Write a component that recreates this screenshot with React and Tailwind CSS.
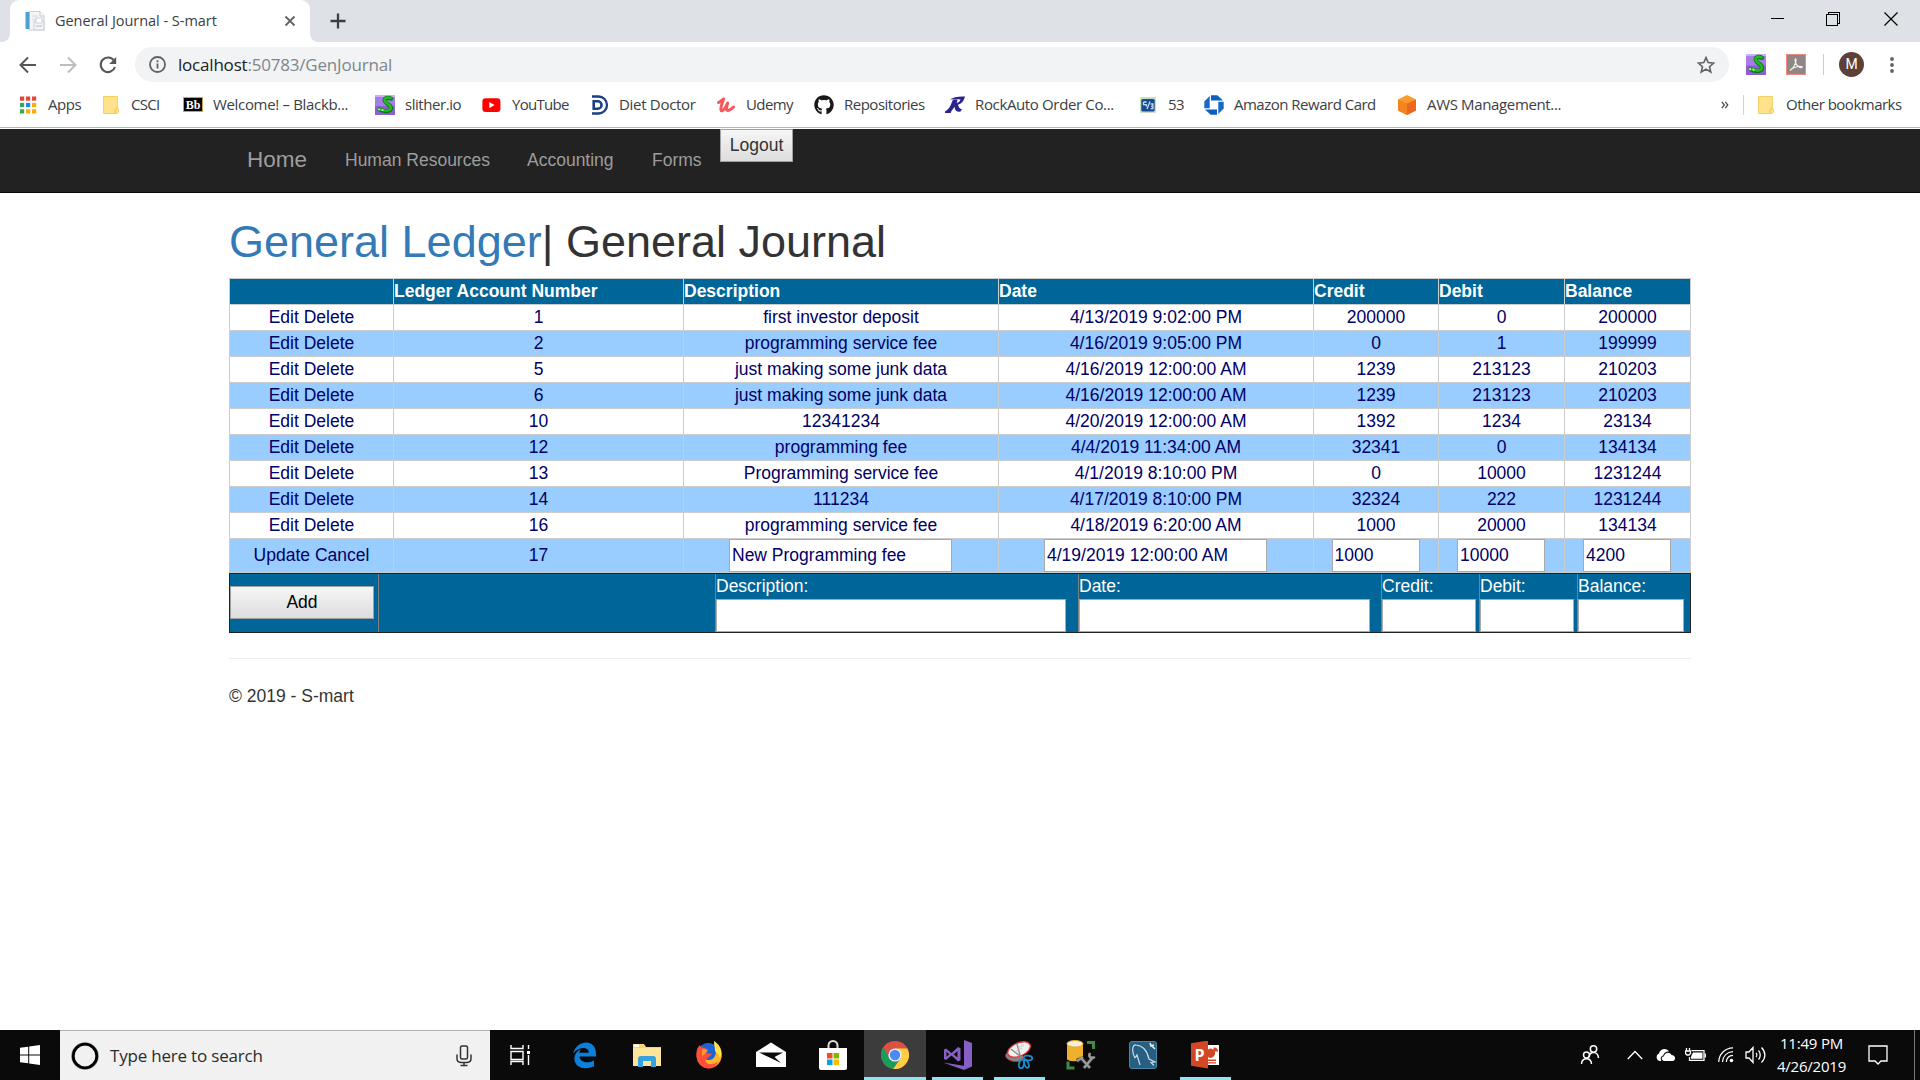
import React from "react";
import { FaGithub } from "react-icons/fa";

const UI = "font-['Open_Sans','Noto_Sans',sans-serif]";

/* ---------- browser icons ---------- */
const PageIcon = () => (
  <svg viewBox="0 0 20 20" className="size-5">
    <path d="M4 .5h11l4 4V19H4z" fill="#f3f5f8" stroke="#ccd1da" />
    <path d="M15 .5V5h4" fill="#fff" stroke="#c3c8d2" />
    <path d="M7 5h6M7 8h8" stroke="#d6dae0" />
    <rect x=".5" y="1" width="4" height="17" fill="#4e9fd4" />
    <rect x="9" y="10" width="10" height="9" fill="#f2f4f6" stroke="#c9ced6" />
    <rect x="11" y="7" width="6" height="5" fill="#fff" stroke="#cdd2da" />
    <path d="M11 15h6" stroke="#b5bbc6" />
  </svg>
);
const AppsIcon = () => (
  <svg viewBox="0 0 20 20" className="size-5">
    {["#ea4335", "#ea4335", "#ea4335", "#34a853", "#1e88f0", "#fbac05", "#34a853", "#fbac05", "#fbac05"].map((c, i) => (
      <rect key={i} x={2 + (i % 3) * 6} y={1.5 + Math.floor(i / 3) * 6.4} width="4.2" height="4.2" fill={c} />
    ))}
  </svg>
);
const FolderIcon = () => (
  <svg viewBox="0 0 20 20" className="size-5">
    <path d="M2.6 1.5h13.8V13c1.8.6 1.8 5.5-.8 5.5h-13z" fill="#ffe28a" stroke="#f3cf62" />
    <path d="M14.6 18.3c-1-1-.7-3 .2-4.5l1.600-1" fill="none" stroke="#eebf45" />
  </svg>
);
const BbIcon = () => (
  <span className="flex h-[15px] w-5 items-center justify-center border border-[#c9a24a] bg-black font-['Liberation_Serif',serif] text-[12px] leading-none font-bold text-white">
    Bb
  </span>
);
const SlitherIcon = () => (
  <svg viewBox="0 0 20 20" preserveAspectRatio="none" className="size-full">
    <rect width="20" height="20" fill="#8f5fd2" />
    <rect width="20" height="11" fill="#a67ce6" />
    <rect width="20" height="2" fill="#c9b0f5" />
    <path d="M16 3.600c-3.500-1.600-6.500-.6-6.300 2 .3 3 6.300 3.900 6.300 7.400 0 3.600-6 4-11.500 1.500" fill="none" stroke="#0c7a12" strokeWidth="4.200" strokeLinecap="round" />
    <path d="M15.600 3.200c-3.200-1.400-6.200-.4-6 2.200.3 3 6.300 3.900 6.300 7.400 0 3.400-6 3.600-11.200 1.400" fill="none" stroke="#20bd25" strokeWidth="2.400" strokeLinecap="round" />
    <circle cx="4" cy="14.500" r="1.100" fill="#b6e8b6" />
    <circle cx="7.500" cy="15" r="1.100" fill="#b6e8b6" />
  </svg>
);
const YouTubeIcon = () => (
  <svg viewBox="0 0 20 20" className="size-5">
    <rect x=".4" y="3.300" width="18" height="13.600" rx="3.200" fill="#f00" />
    <path d="M7.300 7v6.200l5.200-3.100z" fill="#fff" />
  </svg>
);
const DietIcon = () => (
  <svg viewBox="0 0 20 20" className="size-5">
    <path d="M3 1.500h6.500a8.400 8.400 0 0 1 0 17H3" fill="none" stroke="#1c3f86" strokeWidth="2.300" />
    <path d="M4.700 6.200h4a3.800 3.800 0 0 1 0 7.600h-4z" fill="none" stroke="#1c3f86" strokeWidth="2.600" />
  </svg>
);
const UdemyIcon = () => (
  <svg viewBox="0 0 20 20" className="size-5">
    <path d="M2.500 7.500C5 7 6.500 4.500 7.700 4 6.500 7 4.300 12.500 5 15c.9 2.800 5.200-2.200 6.600-7-1.200 4-1.600 7.500.4 7.500 2 0 4-2 5.700-3.500" fill="none" stroke="#f4595e" strokeWidth="3" strokeLinecap="round" strokeLinejoin="round" />
  </svg>
);
const RockIcon = () => (
  <svg viewBox="0 0 20 20" className="size-5">
    <path d="M5 4.500C8 2.300 14 1 20 1.500c-1 4-3 7-7 8.300.5 2.200 1.500 4 4 4.500l-1.500 2.200c-4.500 1-6-2-6-6L11 8c2 0 4-1.500 4.500-3.500C12 4 8 4 5 4.500z" fill="#29248f" />
    <path d="M8 4.500h4.500c-.5 5-4 9-6 11.500L5.500 18H0v-1.500c2-1 4-3 5.500-6z" fill="#29248f" />
  </svg>
);
const FiveThreeIcon = () => (
  <svg viewBox="0 0 20 20" className="size-5">
    <rect x="2" y="2" width="16" height="16" rx="1" fill="#c8dfc0" />
    <rect x="3.300" y="4" width="13.400" height="12.500" rx="1.500" fill="#174a93" />
    <path d="M5.500 7h3M5.500 7v2.600h2.800v2M12 6.500l-3 7.500M12.600 9h2.300v4.600h-2.300M15 11.300h-2" fill="none" stroke="#c9dcf0" strokeWidth="1.300" />
  </svg>
);
const ChaseIcon = () => (
  <svg viewBox="0 0 20 20" className="size-5">
    <path d="M7 .3h6.300L19 5.600H7z" fill="#0b5fc0" />
    <path d="M19.700 6.700v6.700L14.300 19V6.700z" fill="#1569c8" />
    <path d="M13 19.700H6.700L1 14.400h12z" fill="#0b5fc0" />
    <path d="M.3 13.300V6.600L5.700 1v12.300z" fill="#1569c8" />
  </svg>
);
const AwsIcon = () => (
  <svg viewBox="0 0 20 20" className="size-5">
    <path d="M10 0 19 4.500V15.500L10 20 1 15.500V4.500z" fill="#fb9b2b" />
    <path d="M1 4.500 10 8.500V20L1 15.500z" fill="#f58320" />
    <path d="M19 4.500 10 8.500V20L19 15.500z" fill="#ec671f" />
  </svg>
);

const bookmarks = [
  { t: "Apps", w: "w-[83px]", k: "tracking-[-0.45px]", I: AppsIcon },
  { t: "CSCI", w: "w-[82px]", k: "tracking-[-0.7px]", I: FolderIcon },
  { t: "Welcome! – Blackb...", w: "w-[192px]", k: "tracking-[-0.33px]", I: BbIcon },
  { t: "slither.io", w: "w-[107px]", k: "tracking-[-0.45px]", I: SlitherIcon },
  { t: "YouTube", w: "w-[107px]", k: "tracking-[-0.7px]", I: YouTubeIcon },
  { t: "Diet Doctor", w: "w-[127px]", k: "tracking-[-0.3px]", I: DietIcon },
  { t: "Udemy", w: "w-[98px]", k: "tracking-[-0.6px]", I: UdemyIcon },
  { t: "Repositories", w: "w-[131px]", k: "tracking-[-0.5px]", I: () => <FaGithub className="size-5 text-[#191717]" /> },
  { t: "RockAuto Order Co...", w: "w-[193px]", k: "tracking-[-0.36px]", I: RockIcon },
  { t: "53", w: "w-[66px]", k: "tracking-[-0.7px]", I: FiveThreeIcon },
  { t: "Amazon Reward Card", w: "w-[193px]", k: "tracking-[-0.5px]", I: ChaseIcon },
  { t: "AWS Management...", w: "w-[200px]", k: "tracking-[-0.35px]", I: AwsIcon },
];

function TabStrip() {
  return (
    <div className="flex h-[42px] bg-[#dee1e6]">
      <div className="flex w-[10px] items-end bg-white">
        <div className="h-full w-full rounded-br-[8px] bg-[#dee1e6]" />
      </div>
      <div className="flex w-[300px] items-center rounded-t-[9px] bg-white pl-[15px]">
        <PageIcon />
        <span className="ml-[10px] w-[229px] text-[14.500px] tracking-[-0.03px] text-[#3c4043]">General Journal - S-mart</span>
        <svg viewBox="0 0 12 12" className="size-3 text-[#5f6368]">
          <path d="M1.500 1.500l9 9M10.500 1.500l-9 9" stroke="currentColor" strokeWidth="1.800" />
        </svg>
      </div>
      <div className="w-[10px] bg-white">
        <div className="h-full w-full rounded-bl-[8px] bg-[#dee1e6]" />
      </div>
      <svg viewBox="0 0 16 16" className="mt-[13px] ml-[10px] size-4">
        <path d="M8 .5v15M.5 8h15" stroke="#3c4043" strokeWidth="2.300" />
      </svg>
      <div className="ml-auto flex h-[37px] items-center text-black">
        <svg viewBox="0 0 14 14" className="mr-[42px] size-[14px]" shapeRendering="crispEdges">
          <path d="M.5 6.500h13" stroke="currentColor" strokeWidth="1" />
        </svg>
        <svg viewBox="0 0 14 14" className="mr-[44px] size-[14px]" fill="none" stroke="currentColor" strokeWidth="1.200" shapeRendering="crispEdges">
          <path d="M.5 2.500h11v11H.5zM2.500 2.500v-2h11v11h-2" />
        </svg>
        <svg viewBox="0 0 14 14" className="mr-[22px] size-[14px]">
          <path d="M.5.5l13 13M13.500.5l-13 13" stroke="currentColor" strokeWidth="1.200" />
        </svg>
      </div>
    </div>
  );
}

function Toolbar() {
  return (
    <div className="flex h-[45px] items-center bg-white">
      <svg viewBox="0 0 18 18" className="ml-[19px] size-[18px]" fill="none" stroke="#54575b" strokeWidth="2">
        <path d="M17 9H2M9 1.500 1.500 9 9 16.500" />
      </svg>
      <svg viewBox="0 0 18 18" className="ml-[22px] size-[18px]" fill="none" stroke="#bcbdbf" strokeWidth="2">
        <path d="M1 9h15M9 1.500 16.500 9 9 16.500" />
      </svg>
      <svg viewBox="0 0 18 18" className="ml-[22px] size-[18px]" fill="none" stroke="#54575b" strokeWidth="2.100">
        <path d="M15 4.500A7.300 7.300 0 1 0 16 11" />
        <path d="M17.200 1v7h-7z" fill="#54575b" stroke="none" />
      </svg>
      <div className="ml-[18px] flex h-[35px] w-[1594px] items-center rounded-full bg-[#f1f3f4] pl-[14px]">
        <svg viewBox="0 0 17 17" className="size-[17px]" fill="none" stroke="#5f6368" strokeWidth="1.800">
          <circle cx="8.500" cy="8.500" r="7.500" />
          <path d="M8.500 7.500v5M8.500 4.300v1.900" />
        </svg>
        <span className="ml-[12px] text-[17px] tracking-[-0.2px] text-[#80868b]">
          <span className="text-[#202124]">localhost</span>:50783/GenJournal
        </span>
        <svg viewBox="0 0 18 18" className="mr-[14px] ml-auto size-[18px]" fill="none" stroke="#5f6368" strokeWidth="1.600">
          <path d="m9 1.600 2.200 5 5.500.5-4.200 3.600 1.300 5.300L9 13.100 4.200 16l1.300-5.300L1.300 7.100l5.500-.5z" />
        </svg>
      </div>
      <div className="ml-[17px] h-[21px] w-[20px]"><SlitherIcon /></div>
      <div className="ml-[20px] flex h-[21px] w-[20px] items-center justify-center border border-[#f08a80] bg-[#8e8786]">
        <svg viewBox="0 0 16 16" className="size-4" fill="none" stroke="#f3eeee" strokeWidth="1.200">
          <path d="M2 13.500C5 12 8.500 6 8 2.500 7.500.5 6 3 8 6.500s4 4.500 6 4c1-.6-1-1.700-4-1-3 .6-6.500 2-7.500 3.500z" />
        </svg>
      </div>
      <div className="ml-[17px] h-[21px] w-px bg-[#c9cbce]" />
      <div className="ml-[15px] flex size-[25px] items-center justify-center rounded-full bg-[#5d4037] font-[Roboto,sans-serif] text-[14px] text-white">M</div>
      <svg viewBox="0 0 4 18" className="ml-[26px] h-[18px] w-1" fill="#5f6368">
        <circle cx="2" cy="3" r="1.900" /><circle cx="2" cy="9" r="1.900" /><circle cx="2" cy="15" r="1.900" />
      </svg>
    </div>
  );
}

function BookmarkBar() {
  return (
    <div className="flex h-[40px] items-center bg-white pb-[5px] pl-[18px] text-[15px] whitespace-nowrap text-[#3c4043]">
      {bookmarks.map(({ t, w, k, I }) => (
        <div key={t} className={"flex shrink-0 items-center gap-[10px] " + w}>
          <span className="flex size-5 shrink-0 items-center justify-center"><I /></span>
          <span className={k}>{t}</span>
        </div>
      ))}
      <svg viewBox="0 0 10 10" className="ml-[123px] h-2 w-2.5 shrink-0" fill="none" stroke="#4a4d51" strokeWidth="1.600">
        <path d="M1 1l3.200 4L1 9M5.300 1l3.200 4-3.200 4" />
      </svg>
      <div className="ml-[13px] h-5 w-px shrink-0 bg-[#d0d2d5]" />
      <div className="ml-[12px] flex items-center gap-[10px]">
        <FolderIcon />
        <span className="tracking-[-0.5px]">Other bookmarks</span>
      </div>
    </div>
  );
}

/* ---------- page ---------- */
const rows = [
  ["1", "first investor deposit", "4/13/2019 9:02:00 PM", "200000", "0", "200000"],
  ["2", "programming service fee", "4/16/2019 9:05:00 PM", "0", "1", "199999"],
  ["5", "just making some junk data", "4/16/2019 12:00:00 AM", "1239", "213123", "210203"],
  ["6", "just making some junk data", "4/16/2019 12:00:00 AM", "1239", "213123", "210203"],
  ["10", "12341234", "4/20/2019 12:00:00 AM", "1392", "1234", "23134"],
  ["12", "programming fee", "4/4/2019 11:34:00 AM", "32341", "0", "134134"],
  ["13", "Programming service fee", "4/1/2019 8:10:00 PM", "0", "10000", "1231244"],
  ["14", "111234", "4/17/2019 8:10:00 PM", "32324", "222", "1231244"],
  ["16", "programming service fee", "4/18/2019 6:20:00 AM", "1000", "20000", "134134"],
];
const GRID = "grid grid-cols-[164px_290px_315px_315px_125px_126px_126px]";
const CELL = "border-r border-b border-[#cccccc]";
const BTN = "border border-[#a0a0a0] bg-gradient-to-b from-[#f6f6f6] to-[#dddddd] text-center leading-[31px]";

function NavBar() {
  return (
    <nav className="flex h-[64px] items-center border-b border-[#080808] bg-[#222222] pl-[247px] text-[#9d9d9d]">
      <a className="w-[98px] pb-px text-[22.500px]">Home</a>
      <a className="w-[182px]">Human Resources</a>
      <a className="w-[125px]">Accounting</a>
      <a className="w-[68px]">Forms</a>
      <button className={BTN + " h-[33px] w-[73px] self-start text-[#333333]"}>Logout</button>
    </nav>
  );
}

function EditBox({ value, wide }) {
  return (
    <div className={CELL + " flex items-center justify-center pr-px"}>
      <div className={"h-[33px] border border-[#a9a9a9] bg-white pl-[2px] text-left leading-[30px] " + (wide ? "w-[223px]" : "w-[88px]")}>{value}</div>
    </div>
  );
}

function AddField({ label, w, last }) {
  return (
    <div className={last ? "" : "border-r border-[#808080]"}>
      <div className="h-[25px] leading-[24px]">{label}</div>
      <div className={"h-[33px] border border-[#a9a9a9] bg-white " + w} />
    </div>
  );
}

function Journal() {
  return (
    <div className="ml-[229px] w-[1462px]">
      <h1 className="mt-[24px] h-[61px] text-[45px] leading-[50px] text-[#333333]">
        <span className="text-[#337ab7]">General Ledger</span>| General Journal
      </h1>
      <div className="border-t border-l border-[#cccccc] text-[#000066]">
        <div className={GRID + " h-[26px] bg-[#006699] leading-[25px] font-bold text-white"}>
          {["", "Ledger Account Number", "Description", "Date", "Credit", "Debit", "Balance"].map((h) => (
            <div key={h} className={CELL}>{h}</div>
          ))}
        </div>
        {rows.map((r, i) => (
          <div key={i} className={GRID + " h-[26px] text-center leading-[25px] " + (i % 2 ? "bg-[#99ccff]" : "bg-white")}>
            <div className={CELL}>Edit Delete</div>
            {r.map((c, j) => <div key={j} className={CELL}>{c}</div>)}
          </div>
        ))}
        <div className={GRID + " h-[34px] bg-[#99ccff] text-center leading-[33px]"}>
          <div className={CELL}>Update Cancel</div>
          <div className={CELL}>17</div>
          <EditBox wide value="New Programming fee" />
          <EditBox wide value="4/19/2019 12:00:00 AM" />
          <EditBox value="1000" />
          <EditBox value="10000" />
          <EditBox value="4200" />
        </div>
      </div>
      <div className="grid h-[60px] grid-cols-[149px_337px_363px_303px_98px_98px_1fr] border border-[#222222] bg-[#006699] text-white">
        <div className="flex items-center border-r border-[#808080] pb-[2px]">
          <button className={BTN + " h-[33px] w-[144px] text-black"}>Add</button>
        </div>
        <div className="border-r border-[#808080]" />
        <AddField label="Description:" w="w-[350px]" />
        <AddField label="Date:" w="w-[291px]" />
        <AddField label="Credit:" w="w-[94px]" />
        <AddField label="Debit:" w="w-[94px]" />
        <AddField label="Balance:" w="w-[106px]" last />
      </div>
      <hr className="mt-[25px] border-[#eeeeee]" />
      <p className="mt-[25px] leading-[25px] text-[#333333]">© 2019 - S-mart</p>
    </div>
  );
}

/* ---------- taskbar ---------- */
const taskIcons = [
  { n: "edge", w: "w-[62px]", i: (
    <svg viewBox="0 0 28 28" className="size-7 -translate-x-px" fill="none">
      <path d="M3 12.500C5 4.500 12 1 17 1.500c7 .7 9.500 6.500 9 14H9.500c.5 6 8.500 7.500 14.500 4v5.800C14 30 3.500 26 4.500 16.500 5 12 8 9.500 11 8c-1.200 1.500-1.700 3-1.700 3.800h9.500c0-6.500-9.800-6.300-15.800.7z" fill="#0a7fdc" />
    </svg>) },
  { n: "explorer", w: "w-[62px]", i: (
    <svg viewBox="0 0 28 28" className="size-7">
      <path d="M0 3h11l2 3h15v19H0z" fill="#f8d46c" /><rect x="1" y="3.500" width="5" height="2.500" fill="#fff" />
      <path d="M0 7h28v18H0z" fill="#fee59a" /><path d="M5 26v-8a3 3 0 0 1 3-3h12a3 3 0 0 1 3 3v8h-5v-6h-8v6z" fill="#35a3e0" />
    </svg>) },
  { n: "firefox", w: "w-[62px]", i: (
    <svg viewBox="0 0 28 28" className="size-7">
      <circle cx="14" cy="15" r="12.500" fill="#f0502a" />
      <path d="M5 6c4-5 10-5 14-2l4 9-8 8-9-5z" fill="#1c63d8" />
      <path d="M19 0c7 4 10 13 6 20s-13 8-18 4c-4-3-5-8-3-14 1 4 3 6 5 7 3 3 9 3 11-2 2-4 0-8-1-15z" fill="#ffb52c" />
      <path d="M19 0c6 5 9 10 6 17-1-4-3-5-5-7 0-4-1-7-1-10z" fill="#ffe44a" />
      <path d="M1.500 14C1 9 3 6 5 4c0 2 2 3 5 3l3 2-2 3c2 1 5 0 6 1-2 3-8 5-6 8 3 4 10 2 12-1-2 7-10 9-15 6s-6-8-6.500-12z" fill="#ff4f3a" />
      <path d="M7 8l6 1-3 4-3 2z" fill="#ff9a2a" />
    </svg>) },
  { n: "mail", w: "w-[62px]", i: (
    <svg viewBox="0 0 30 28" className="h-7 w-[30px]">
      <path d="M0 11 15 1.500 30 11v15H0z" fill="#fff" />
      <path d="M3 11.500h24l-8.500 4.500 6.500 6-12.500-6z" fill="#0a0a0a" />
    </svg>) },
  { n: "store", w: "w-[62px]", i: (
    <svg viewBox="0 0 28 30" className="h-[30px] w-7">
      <path d="M9.500 9V5.500a4.500 4.500 0 0 1 9 0V9" fill="none" stroke="#ddd" strokeWidth="2" />
      <path d="M0 8h28v20a2 2 0 0 1-2 2H2a2 2 0 0 1-2-2z" fill="#fff" />
      <path d="M8 13h5.500v5.500H8z" fill="#f25022" /><path d="M14.500 13H20v5.500h-5.500z" fill="#7fba00" />
      <path d="M8 19.500h5.500V25H8z" fill="#00a4ef" /><path d="M14.500 19.500H20V25h-5.500z" fill="#ffb900" />
    </svg>) },
  { n: "chrome", w: "w-[62px]", active: true, i: (
    <svg viewBox="0 0 28 28" className="size-7">
      <circle cx="14" cy="14" r="14" fill="#dd5044" />
      <path d="M2.300 6.300a14 14 0 0 0 9.900 21.600L19 17.500 14 20l-5.500-3z" fill="#1a9c5b" />
      <path d="M26.300 7.500H14l6 9.500-7.800 10.900A14 14 0 0 0 26.300 7.500z" fill="#ffce43" />
      <circle cx="14" cy="14" r="6.600" fill="#f1f1f1" /><circle cx="14" cy="14" r="5.200" fill="#4a8af4" />
    </svg>) },
  { n: "vs", w: "w-[62px]", open: true, i: (
    <svg viewBox="0 0 29 30" className="h-[30px] w-[29px]" fill="#865fc5">
      <path d="M21 0 29 3v23.500L21 30 0 22.500l21 3.200z" />
      <path fillRule="evenodd" d="M1 9.500 3 8.500l5.500 4.500L15 7l2.500 1.200v12L15 21.500l-6.500-6L3 20l-2-1zM3.500 11.800v5L6.200 14.300zM14.500 11.200l-3.800 3.100 3.800 3.100z" />
    </svg>) },
  { n: "snip", w: "w-[62px]", open: true, i: (
    <svg viewBox="0 0 28 28" className="size-7">
      <ellipse cx="9.500" cy="15.500" rx="9" ry="5" fill="#858585" stroke="#c33" strokeWidth=".8" transform="rotate(8 9.500 15.500)" />
      <ellipse cx="14" cy="8.500" rx="12" ry="6.600" fill="#f1f1f1" stroke="#e03a3a" strokeWidth="1.300" transform="rotate(-24 14 8.500)" />
      <path d="m12 3 3.500 13M6 8l10 8" stroke="#8d8d8d" strokeWidth="1.500" /><path d="M13 7l6-3M10 11l7-4" stroke="#c7c7c7" />
      <g fill="none" stroke="#1b8bd0" strokeWidth="1.800"><ellipse cx="23" cy="17" rx="4.300" ry="2.300" transform="rotate(8 23 17)" /><ellipse cx="16.500" cy="23" rx="2.500" ry="4.300" transform="rotate(12 16.500 23)" /><ellipse cx="21.500" cy="23" rx="2" ry="4" transform="rotate(-22 21.500 23)" /></g>
    </svg>) },
  { n: "db", w: "w-[62px]", i: (
    <svg viewBox="0 0 30 30" className="size-[30px]">
      <path d="M1 3.500v15.500c0 3 16 3 16 0V3.500z" fill="#efb12d" /><ellipse cx="9" cy="3.800" rx="8" ry="3.300" fill="#f7efda" stroke="#e3a72c" />
      <path d="M21 2.500h6.500V9M2 21.500V28h6.500" fill="none" stroke="#3f8a45" strokeWidth="3" />
      <path d="m16 19 8 9M18 28l9-11M11 21l7-3" stroke="#222" strokeWidth="4.500" />
      <path d="m15 18 9 10M18 28l9-11M11 21l6-4" stroke="#9b9b9b" strokeWidth="2.500" /><path d="M24 13c-2 4 1 6 5 4" fill="none" stroke="#9b9b9b" strokeWidth="2.500" />
    </svg>) },
  { n: "mysql", w: "w-[62px]", i: (
    <svg viewBox="0 0 28 28" className="size-7">
      <rect x=".5" y=".5" width="27" height="27" rx="2.500" fill="#275f83" stroke="#4b86a8" />
      <path d="M6 17C2.500 11 3 3.500 7 4c6 .5 11 5 13 14l6 3-4 .5 3 3M6 17l2-3 3 10" fill="none" stroke="#c9dde8" strokeWidth="1.200" />
      <path d="m22 4 4 4M21 2l1 3 3-1" fill="none" stroke="#e8f0f4" strokeWidth="1.600" />
    </svg>) },
  { n: "ppt", w: "w-[62px]", open: true, i: (
    <div className="flex size-7 items-center">
      <div className="flex h-7 w-[17px] items-center justify-center bg-[#d24726] font-['Open_Sans',sans-serif] text-[16px] leading-none font-bold text-white [clip-path:polygon(0_10%,100%_0,100%_100%,0_90%)]">P</div>
      <svg viewBox="0 0 11 22" className="h-[22px] w-[11px]">
        <path d="M0 1h11v20H0z" fill="#fff" />
        <path d="M0 5.500a4.500 4.500 0 1 1 0 7.500zM5.500 3.500h1.500a4 4 0 0 1 3 4H5.500zM0 15.500h8V17H0zM0 18.300h8v1.200H0z" fill="#d24726" />
      </svg>
    </div>) },
];

function Taskbar() {
  return (
    <div className={UI + " flex h-[50px] bg-[#0a0a0a] text-white"}>
      <div className="flex w-[60px] items-center justify-center">
        <svg viewBox="0 0 20 20" className="size-5" fill="#fff">
          <path d="M0 2.800 8.200 1.700v7.800H0zM9.200 1.500 20 0v9.500H9.200zM0 10.500h8.200v7.800L0 17.200zM9.200 10.500H20V20L9.200 18.500z" />
        </svg>
      </div>
      <div className="flex w-[430px] items-center border-t border-[#b5b5b5] bg-[#f1f1f1] pl-[11px]">
        <svg viewBox="0 0 28 28" className="size-7" fill="none">
          <circle cx="14" cy="14" r="12.300" stroke="#999" strokeWidth="3" /><circle cx="14" cy="14" r="11.800" stroke="#000" strokeWidth="2.800" />
        </svg>
        <span className="ml-[11px] text-[17px] tracking-[-0.2px] text-[#2b2b2b]">Type here to search</span>
        <svg viewBox="0 0 16 22" className="mr-[18px] ml-auto h-[22px] w-4" fill="none" stroke="#333" strokeWidth="1.500">
          <rect x="4.500" y="1" width="7" height="13" rx="1.500" /><path d="M1 9.500v4c0 3 2 4 4.500 4h5c2.500 0 4.500-1 4.500-4v-4M8 17.500V21M4.500 20.500h7" />
        </svg>
      </div>
      <div className="flex w-[64px] items-center pl-[20px]">
        <svg viewBox="0 0 21 20" className="h-5 w-[21px]" fill="none" stroke="#fff" strokeWidth="1.400">
          <path d="M1 0v3.500h12V0M1 6.500h12v8H1zM1 20v-3.500h12V20M18.500 0v4M18.500 10v10" /><path d="M17 6h3v3h-3z" fill="#fff" stroke="none" />
        </svg>
      </div>
      {taskIcons.map(({ n, w, i, active, open }) => (
        <div key={n} className={"flex flex-col items-center " + w + (active ? " bg-[#3c3c3c]" : "")}>
          <div className="flex h-[47px] items-center pt-[2px]">{i}</div>
          {(active || open) && <div className={"h-[3px] bg-[#8fe4ee] " + (active ? "w-full" : "w-[51px]")} />}
        </div>
      ))}
      <div className="ml-auto flex w-[340px] items-center">
        <svg viewBox="0 0 20 20" className="h-5 w-5" fill="none" stroke="#fff" strokeWidth="1.500">
          <circle cx="13.500" cy="4" r="3.200" /><path d="M9 12c1-6 9-6 9.500 1" /><circle cx="6.500" cy="10" r="3" /><path d="M1.500 19c.5-7 9.500-7 10 0" />
        </svg>
        <svg viewBox="0 0 16 10" className="ml-[27px] h-2.5 w-4" fill="none" stroke="#fff" strokeWidth="1.400"><path d="M.8 9 8 1.500 15.200 9" /></svg>
        <svg viewBox="0 0 20 12" className="ml-[12px] h-3 w-5" fill="#fff">
          <path d="M4.500 12a4 4 0 0 1-.6-7.500C4.500 2 7 0 9.500 0c2 0 3.700 1 4.500 2.500-4 0-5 2-5.800 4C6 7 5 9.500 6.500 12z" />
          <path d="M9 12c-3-.3-3-4.500 0-4.700C9.500 3 15 2.500 16.500 6c4.500 0 4.500 5.600 1 6z" />
        </svg>
        <svg viewBox="0 0 21 15" className="ml-[10px] h-[15px] w-[21px]" fill="none" stroke="#fff" strokeWidth="1.300">
          <path d="M6.500 2.700H19v9.600H4.500V9" /><path d="M8 4.500h9.500v6.200H6V8.500z" fill="#fff" stroke="none" /><path d="M20.300 5.500v4M1.500 0v3M4.500 0v3M.5 3h5v2.500L4 7H2L.5 5.500z" />
        </svg>
        <svg viewBox="0 0 16 16" className="ml-[12px] size-4" fill="none" stroke="#fff" strokeWidth="1.200">
          <path d="M.7 15C1 7 7 1 15 .8M4.500 15C5 9 9 5 15 4.700M8.300 15c.3-4 3-6.500 6.700-6.700" /><circle cx="13.500" cy="13.500" r="1.800" fill="#fff" stroke="none" />
        </svg>
        <svg viewBox="0 0 21 18" className="ml-[11px] h-[18px] w-[21px]" fill="none" stroke="#fff" strokeWidth="1.300">
          <path d="M1 6h3l4-4.500v15L4 12H1zM11 7c1 1 1 3 0 4M13.500 4.500c2.300 2.500 2.300 6.500 0 9M16.500 1.500c4.500 4.500 4.500 10.500 0 15" />
        </svg>
        <div className="ml-[8px] w-[75px] text-center text-[15px] leading-[23px] tracking-[-0.2px]">11:49 PM<br />4/26/2019</div>
        <svg viewBox="0 0 20 20" className="ml-[19px] size-5" fill="none" stroke="#fff" strokeWidth="1.300">
          <path d="M1 1h18v15h-6l-3 3-3-3H1z" />
        </svg>
        <div className="ml-auto h-[50px] w-[6px] border-l border-[#777777]" />
      </div>
    </div>
  );
}

export default function App() {
  return (
    <div className="flex h-[1080px] w-[1920px] flex-col overflow-hidden bg-white">
      <header className={UI + " h-[129px] shrink-0"}>
        <TabStrip />
        <Toolbar />
        <BookmarkBar />
        <div className="h-px bg-[#b4b7ba]" />
        <div className="h-px bg-white" />
      </header>
      <main className="flex-1 font-['Liberation_Sans',Arial,sans-serif] text-[17.5px] whitespace-nowrap">
        <NavBar />
        <Journal />
      </main>
      <Taskbar />
    </div>
  );
}
